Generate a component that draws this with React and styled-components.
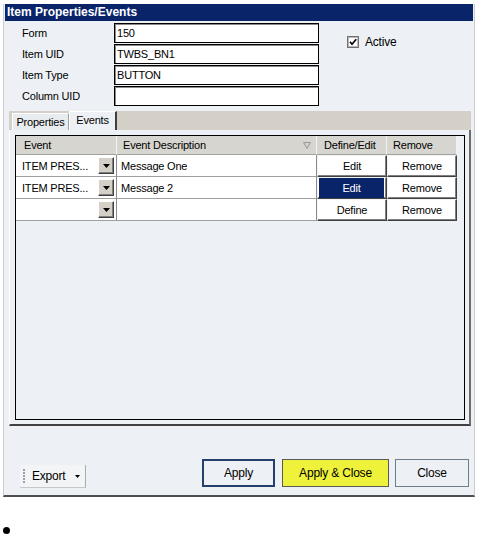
import { Fragment } from "react";
import styled, { createGlobalStyle } from "styled-components";

const GlobalStyle = createGlobalStyle`
  body {
    margin: 0;
    background: #ffffff;
    font-family: "Liberation Sans", Arial, sans-serif;
    font-size: 11px;
    letter-spacing: -0.2px;
    color: #000;
  }
`;

const Window = styled.div`
  width: 470px;
  margin: 4px 0 0 3px;
  background: #edf1f5;
  border-left: 1px solid #c9ced4;
  border-right: 1px solid #c9ced4;
  border-bottom: 2px solid #4e4e4e;
`;

const TitleBar = styled.div`
  margin: 0 1px;
  height: 17px;
  padding-left: 2px;
  background: #0a246a;
  color: #fff;
  font-size: 12px;
  font-weight: bold;
  letter-spacing: 0;
  line-height: 17px;
`;

const FormArea = styled.div`
  display: flex;
  padding: 2px 0 0 18px;
  margin-bottom: 5px;
`;

const Fields = styled.div`
  display: grid;
  grid-template-columns: 92px 205px;
  grid-auto-rows: 20px;
  row-gap: 1px;
`;

const Label = styled.div`
  display: flex;
  align-items: center;
`;

const TextBox = styled.div`
  box-sizing: border-box;
  height: 20px;
  padding-left: 2px;
  border: 1px solid #000;
  box-shadow: inset 1px 1px 0 #8a8a8a;
  background: #fff;
  line-height: 18px;
`;

const ActiveToggle = styled.label`
  display: flex;
  align-items: center;
  gap: 6px;
  height: 12px;
  margin: 13px 0 0 28px;
  font-size: 12px;
`;

const Tabs = styled.div`
  margin: 0 3px 0 5px;
`;

const TabStrip = styled.div`
  display: flex;
  align-items: flex-end;
  height: 19px;
  padding-left: 3px;
  background: #d4d0c8;
`;

const Tab = styled.div`
  box-sizing: border-box;
  display: flex;
  align-items: center;
  justify-content: center;
  width: ${(p) => (p.$active ? "48px" : "57px")};
  height: ${(p) => (p.$active ? "19px" : "17px")};
  padding-bottom: ${(p) => (p.$active ? "3px" : "0")};
  background: ${(p) => (p.$active ? "#edf1f5" : "#e9ecef")};
  border-top: 1px solid #fff;
  border-left: 1px solid #fff;
  border-right: ${(p) => (p.$active ? "2px solid #404040" : "1px solid #a0a0a0")};
`;

const TabPanel = styled.div`
  padding: 5px 4px 4px 5px;
  background: #edf1f5;
  border-left: 1px solid #fff;
  border-right: 2px solid #6c6c6c;
  border-bottom: 2px solid #404040;
`;

const GridBox = styled.div`
  height: 283px;
  border: 1px solid #000;
  background: #edf1f5;
`;

const Table = styled.div`
  display: grid;
  grid-template-columns: 101px 200px 70px 70px;
  grid-template-rows: 19px;
  grid-auto-rows: 22px;
`;

const HeadCell = styled.div`
  box-sizing: border-box;
  display: flex;
  align-items: center;
  padding-left: ${(p) => p.$pad || "6px"};
  padding-right: 5px;
  background: #d6d5cf;
  border-right: 1px solid #f2f2f2;
  border-bottom: 1px solid #a0a0a0;
`;

const HeadText = styled.span`
  flex: 1;
`;

const Cell = styled.div`
  box-sizing: border-box;
  display: flex;
  align-items: center;
  padding-left: ${(p) => p.$pad || "4px"};
  background: #fff;
  border-right: 1px solid #8a8a8a;
  border-bottom: 1px solid #a0a0a0;
`;

const DropButton = styled.div`
  box-sizing: border-box;
  display: flex;
  align-items: center;
  justify-content: center;
  width: 16px;
  height: 17px;
  margin: 0 2px 0 auto;
  background: #d4d0c8;
  border: 1px solid;
  border-color: #fff #404040 #404040 #fff;
  box-shadow: inset -1px -1px 0 #808080;
`;

const GridButton = styled.div`
  box-sizing: border-box;
  display: flex;
  align-items: center;
  justify-content: center;
  background: #fff;
  border: 1px solid;
  border-color: #f4f4f4 #404040 #404040 #f4f4f4;
  box-shadow: inset -1px -1px 0 #808080;
  color: ${(p) => (p.$selected ? "#fff" : "#000")};

  span {
    display: flex;
    align-items: center;
    justify-content: center;
    width: 100%;
    height: 100%;
    margin: ${(p) => (p.$selected ? "1px 2px 2px 1px" : "0")};
    background: ${(p) => (p.$selected ? "#0a246a" : "transparent")};
  }
`;

const Footer = styled.div`
  box-sizing: border-box;
  display: flex;
  align-items: flex-end;
  height: 69px;
  padding: 0 5px 7px 16px;
`;

const ExportBar = styled.div`
  box-sizing: border-box;
  display: flex;
  align-items: center;
  width: 66px;
  height: 23px;
  padding-left: 3px;
  background: #f2f4f6;
  border-right: 1px solid #a8acb0;
  border-bottom: 1px solid #c4c8cc;
`;

const ExportLabel = styled.span`
  margin: 0 10px 0 7px;
  font-size: 12px;
`;

const ActionButton = styled.div`
  box-sizing: border-box;
  display: flex;
  align-items: center;
  justify-content: center;
  width: ${(p) => p.$width};
  height: 28px;
  margin: 0 0 1px ${(p) => p.$gap || "7px"};
  font-size: 12px;
  background: ${(p) => (p.$variant === "accent" ? "#eef23a" : "#edf1f5")};
  border: ${(p) =>
    p.$variant === "primary"
      ? "2px solid #23406e"
      : p.$variant === "accent"
      ? "1px solid #5a5a5a"
      : "1px solid #6f7c8a"};
`;

const Bullet = styled.div`
  width: 7px;
  height: 7px;
  margin: 30px 0 0 3px;
  border-radius: 50%;
  background: #000;
`;

const fields = [
  ["Form", "150"],
  ["Item UID", "TWBS_BN1"],
  ["Item Type", "BUTTON"],
  ["Column UID", ""],
];

const events = [
  { event: "ITEM PRES...", desc: "Message One", action: "Edit" },
  { event: "ITEM PRES...", desc: "Message 2", action: "Edit", selected: true },
  { event: "", desc: "", action: "Define" },
];

const Check = () => (
  <svg width="12" height="12" viewBox="0 0 12 12">
    <rect x="0.5" y="0.5" width="11" height="11" fill="#fff" stroke="#707070" />
    <rect x="1.5" y="1.5" width="9" height="9" fill="none" stroke="#b8b8b8" />
    <path d="M3 5.8 L5 8.2 L9.2 3.2" fill="none" stroke="#000" strokeWidth="1.7" />
  </svg>
);

const DownArrow = ({ w = 7, h = 4, color = "#000" }) => (
  <svg width={w} height={h} viewBox={`0 0 ${w} ${h}`}>
    <path d={`M0 0 L${w} 0 L${w / 2} ${h} Z`} fill={color} />
  </svg>
);

const FilterIcon = () => (
  <svg width="8" height="7" viewBox="0 0 8 7">
    <path d="M0.5 0.5 L7.5 0.5 L4 6.5 Z" fill="#d0d0d0" stroke="#9a9a9a" />
  </svg>
);

const Grip = () => (
  <svg width="2" height="14" viewBox="0 0 2 14">
    {[0, 3, 6, 9, 12].map((y) => (
      <rect key={y} x="0" y={y} width="2" height="2" fill="#9aa0a6" />
    ))}
  </svg>
);

export default function App() {
  return (
    <>
      <GlobalStyle />
      <Window>
        <TitleBar>Item Properties/Events</TitleBar>
        <FormArea>
          <Fields>
            {fields.map(([label, value]) => (
              <Fragment key={label}>
                <Label>{label}</Label>
                <TextBox>{value}</TextBox>
              </Fragment>
            ))}
          </Fields>
          <ActiveToggle>
            <Check />
            Active
          </ActiveToggle>
        </FormArea>

        <Tabs>
          <TabStrip>
            <Tab>Properties</Tab>
            <Tab $active>Events</Tab>
          </TabStrip>
          <TabPanel>
            <GridBox>
              <Table>
                <HeadCell $pad="8px">Event</HeadCell>
                <HeadCell>
                  <HeadText>Event Description</HeadText>
                  <FilterIcon />
                </HeadCell>
                <HeadCell $pad="7px">Define/Edit</HeadCell>
                <HeadCell>Remove</HeadCell>
                {events.map((row, i) => (
                  <Fragment key={i}>
                    <Cell $pad="6px">
                      {row.event}
                      <DropButton>
                        <DownArrow />
                      </DropButton>
                    </Cell>
                    <Cell>{row.desc}</Cell>
                    <GridButton $selected={row.selected}>
                      <span>{row.action}</span>
                    </GridButton>
                    <GridButton>
                      <span>Remove</span>
                    </GridButton>
                  </Fragment>
                ))}
              </Table>
            </GridBox>
          </TabPanel>
        </Tabs>

        <Footer>
          <ExportBar>
            <Grip />
            <ExportLabel>Export</ExportLabel>
            <DownArrow w={5} h={3} />
          </ExportBar>
          <ActionButton $variant="primary" $width="73px" $gap="auto">
            Apply
          </ActionButton>
          <ActionButton $variant="accent" $width="107px">
            Apply &amp; Close
          </ActionButton>
          <ActionButton $width="74px" $gap="6px">
            Close
          </ActionButton>
        </Footer>
      </Window>
      <Bullet />
    </>
  );
}
